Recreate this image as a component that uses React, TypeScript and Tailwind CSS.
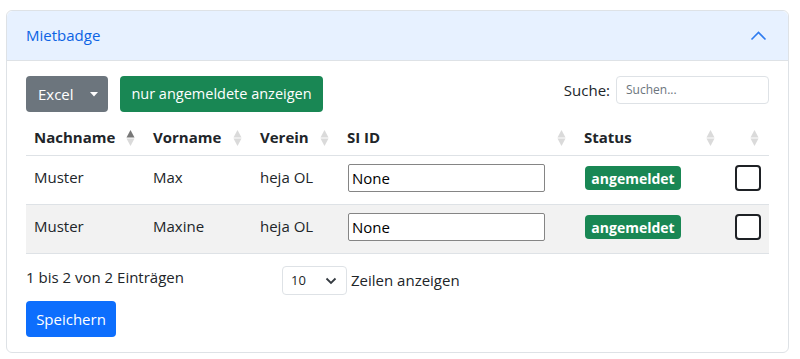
const font = { fontFamily: '"Open Sans", "Noto Sans", sans-serif' }

type Row = { nachname: string; vorname: string; verein: string; siId: string; status: string }

const rows: Row[] = [
    { nachname: "Muster", vorname: "Max", verein: "heja OL", siId: "None", status: "angemeldet" },
    { nachname: "Muster", vorname: "Maxine", verein: "heja OL", siId: "None", status: "angemeldet" },
]

const SortIcon = ({ active }: { active?: boolean }) => (
    <svg width="9" height="18" viewBox="0 0 9 18" className="shrink-0">
        <path d="M4.5 1 L8.5 8.6 L0.5 8.6 Z" fill={active ? "#777777" : "#dadada"} />
        <path d="M4.5 17 L8.5 9.4 L0.5 9.4 Z" fill="#dadada" />
    </svg>
)

const HeadCell = ({ label, width, active }: { label: string; width: string; active?: boolean }) => (
    <div className={`flex items-center justify-between pl-2 pr-[10px] ${width}`}>
        <span className="font-bold text-[15px] text-[#212529]">{label}</span>
        <SortIcon active={active} />
    </div>
)

export default function App() {
    return (
        <div className="pt-[10px] pl-[6px] pr-[11px]" style={font}>
            <div className="rounded-[6px] border border-[#dee2e6] bg-white">
                <div className="flex h-[50px] items-center justify-between rounded-t-[6px] border-b border-[#dee2e6] bg-[#e7f1ff] pl-[19px] pr-5">
                    <span className="text-[15px] text-[#0c63e4]">Mietbadge</span>
                    <svg width="17" height="10" viewBox="0 0 17 10" className="mr-[1px]">
                        <path d="M1.5 8.5 L8.5 1.5 L15.5 8.5" fill="none" stroke="#2f7cf0" strokeWidth="1.6" />
                    </svg>
                </div>

                <div className="px-[19px] pt-[15px] pb-[15px] text-[#212529]">
                    <div className="flex items-center justify-between">
                        <div className="flex gap-3">
                            <button className="flex h-[36px] w-[82px] items-center justify-between rounded-[4px] bg-[#6c757d] pl-3 pr-[10px] text-[15px] text-white">
                                Excel
                                <svg width="8" height="5" viewBox="0 0 8 5">
                                    <path d="M0 0 L8 0 L4 4.5 Z" fill="white" />
                                </svg>
                            </button>
                            <button className="h-[36px] w-[203px] rounded-[4px] bg-[#198754] text-[14.5px] text-white">
                                nur angemeldete anzeigen
                            </button>
                        </div>
                        <div className="flex items-center gap-[6px] self-start">
                            <span className="text-[15px]">Suche:</span>
                            <div className="flex h-[28px] w-[153px] items-center rounded-[4px] border border-[#dee2e6] px-[9px] text-[12px] text-[#6c757d]">
                                Suchen...
                            </div>
                        </div>
                    </div>

                    <div className="mt-2">
                        <div className="flex h-[36px] items-center border-b border-[#dee2e6]">
                            <HeadCell label="Nachname" width="w-[119px]" active />
                            <HeadCell label="Vorname" width="w-[107px]" />
                            <HeadCell label="Verein" width="w-[87px]" />
                            <HeadCell label="SI ID" width="w-[237px]" />
                            <HeadCell label="Status" width="w-[149px]" />
                            <div className="flex flex-1 justify-end pr-[10px]">
                                <SortIcon />
                            </div>
                        </div>
                        {rows.map((r, i) => (
                            <div
                                key={i}
                                className={`flex h-[49px] items-center border-b border-[#dee2e6] text-[15px] ${i % 2 === 1 ? "bg-[#f2f2f2]" : "bg-white"}`}
                            >
                                <div className="w-[119px] pl-2 pb-[6px]">{r.nachname}</div>
                                <div className="w-[107px] pl-2 pb-[6px]">{r.vorname}</div>
                                <div className="w-[87px] pl-2 pb-[6px]">{r.verein}</div>
                                <div className="w-[237px] pl-[9px] pb-[4px]">
                                    <div className="flex h-[28px] w-[197px] items-center rounded-[2px] border border-[#858585] bg-white px-[3px] text-[15px] text-black">
                                        {r.siId}
                                    </div>
                                </div>
                                <div className="w-[149px] pl-[9px] pb-[4px]">
                                    <span className="inline-flex h-[24px] w-[96px] items-center justify-center rounded-[4px] bg-[#198754] text-[14px] font-bold text-white">
                                        {r.status}
                                    </span>
                                </div>
                                <div className="flex flex-1 justify-end pr-2 pb-[4px]">
                                    <div className="h-[26px] w-[26px] rounded-[4px] border-2 border-[#1e2125] bg-white" />
                                </div>
                            </div>
                        ))}
                    </div>

                    <div className="mt-3 flex items-center">
                        <div className="w-[256px] pb-[6px] text-[15px]">1 bis 2 von 2 Einträgen</div>
                        <div className="flex h-[29px] w-[65px] items-center justify-between rounded-[4px] border border-[#dee2e6] pl-[8px] pr-[9px] text-[13px]">
                            10
                            <svg width="12" height="8" viewBox="0 0 12 8">
                                <path d="M1.5 1.5 L6 6 L10.5 1.5" fill="none" stroke="#343a40" strokeWidth="1.8" />
                            </svg>
                        </div>
                        <span className="ml-1 text-[15px]">Zeilen anzeigen</span>
                    </div>

                    <button className="mt-[6px] h-[36px] w-[90px] rounded-[4px] bg-[#0d6efd] text-[15px] text-white">
                        Speichern
                    </button>
                </div>
            </div>
        </div>
    )
}
